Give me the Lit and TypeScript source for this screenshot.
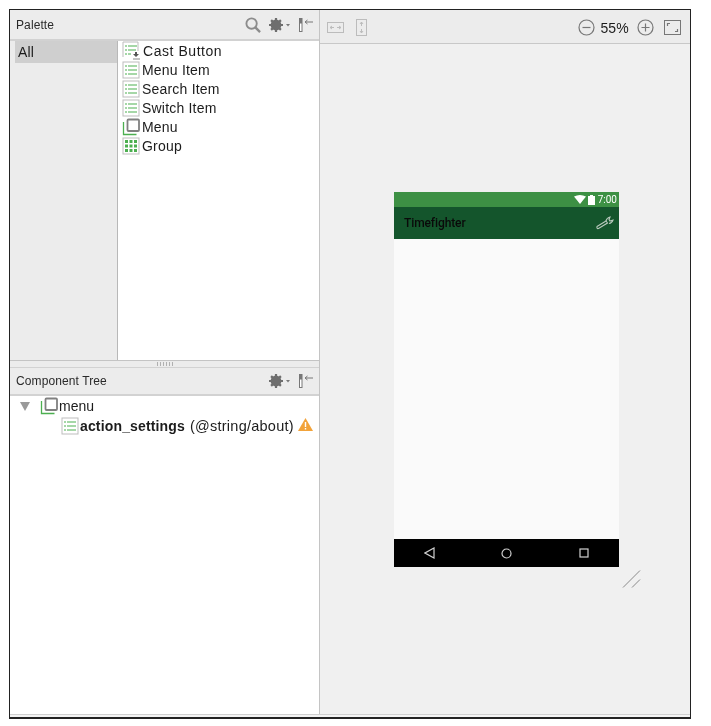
import { LitElement, css, html, svg } from "lit"
import { customElement } from "lit/decorators.js"

const listIcon = svg`<svg class="ico" width="18" height="18" viewBox="0 0 18 18">
  <rect x="1" y="1" width="16" height="16" fill="#fff" stroke="#bdbdbd"/>
  <g stroke="#4caf50" stroke-width="1.2">
    <path d="M3 5h2M6 5h9M3 9h2M6 9h9M3 13h2M6 13h9"/>
  </g>
</svg>`

const castIcon = svg`<svg class="ico" width="18" height="19" viewBox="0 0 18 19">
  <path d="M1 16V1h15v9" fill="#fff" stroke="#bdbdbd"/>
  <g stroke="#4caf50" stroke-width="1.2">
    <path d="M3 5h2M6 5h9M3 9h2M6 9h8M3 13h2M6 13h3"/>
  </g>
  <path d="M13 11h2v2h2l-3 3-3-3h2z" fill="#555"/>
  <path d="M11 18h7" stroke="#888"/>
</svg>`

const menuIcon = svg`<svg class="ico" width="18" height="18" viewBox="0 0 18 18">
  <path d="M1.500 4v12.500h13" fill="none" stroke="#4caf50" stroke-width="1.300"/>
  <rect x="5.500" y="1.500" width="11.500" height="11.500" rx="1" fill="#fff" stroke="#808080" stroke-width="1.800"/>
</svg>`

const groupIcon = svg`<svg class="ico" width="18" height="18" viewBox="0 0 18 18">
  <rect x="1" y="1" width="16" height="16" fill="#fff" stroke="#bdbdbd"/>
  <g fill="#4caf50">
    <rect x="3" y="3" width="3" height="3"/><rect x="7.500" y="3" width="3" height="3"/><rect x="12" y="3" width="3" height="3"/>
    <rect x="3" y="7.500" width="3" height="3"/><rect x="7.500" y="7.500" width="3" height="3"/><rect x="12" y="7.500" width="3" height="3"/>
    <rect x="3" y="12" width="3" height="3"/><rect x="7.500" y="12" width="3" height="3"/><rect x="12" y="12" width="3" height="3"/>
  </g>
</svg>`

const searchIcon = svg`<svg width="16" height="16" viewBox="0 0 17 17" fill="none" stroke="#8c8c8c" stroke-width="2">
  <circle cx="7" cy="7" r="5.500"/><path d="M11 11l5 5" stroke-width="2.500"/>
</svg>`

const gearIcon = svg`<svg width="22" height="14" viewBox="0 0 22 14">
  <circle cx="7" cy="7" r="4" fill="none" stroke="#6e6e6e" stroke-width="2.800"/>
  <path d="M7 0v14M0 7h14M2.100 2.100l9.800 9.800M11.900 2.100l-9.800 9.800" stroke="#6e6e6e" stroke-width="2.200"/>
  <path d="M17 6h4l-2 2.500z" fill="#777"/>
</svg>`

const pinIcon = svg`<svg width="14" height="14" viewBox="0 0 14 14" fill="none">
  <rect x="0.500" y="0.500" width="2.500" height="13" fill="#fff" stroke="#777"/>
  <path d="M0.500 0.500h2.500v5h-2.500z" fill="#777"/>
  <path d="M6 4h8M6 4l2.500-2M6 4l2.500 2" stroke="#777"/>
</svg>`

const warnIcon = svg`<svg width="15" height="13" viewBox="0 0 15 13">
  <path d="M7.500 0L15 13H0z" fill="#f2a33a"/>
  <path d="M6.800 4h1.400v5H6.800zM6.800 10h1.400v1.500H6.800z" fill="#fff"/>
</svg>`

const palette = [
  { name: "Cast Button", icon: castIcon },
  { name: "Menu Item", icon: listIcon },
  { name: "Search Item", icon: listIcon },
  { name: "Switch Item", icon: listIcon },
  { name: "Menu", icon: menuIcon },
  { name: "Group", icon: groupIcon },
]

@customElement("app-root")
export class AppRoot extends LitElement {
  static styles = css`
    :host {
      display: block;
      width: 711px;
      height: 726px;
      background: #fff;
      padding: 9px 0 0 9px;
      box-sizing: border-box;
      font-family: "Liberation Sans", Arial, sans-serif;
      color: #1c1c1c;
    }
    .frame {
      width: 682px;
      height: 710px;
      box-sizing: border-box;
      border: 1.500px solid #222;
      border-bottom-width: 2px;
      display: flex;
      background: #f0f0f0;
      padding-bottom: 3px;
      position: relative;
      filter: blur(0.3px);
    }
    .frame::after {
      content: "";
      position: absolute;
      left: 0;
      right: 0;
      bottom: 0;
      height: 3px;
      background: #f3f3f3;
      border-top: 1px solid #d0d0d0;
      box-sizing: border-box;
    }
    .left {
      width: 309px;
      flex: none;
      display: flex;
      flex-direction: column;
      border-right: 1px solid #c4c4c4;
    }
    .head {
      height: 31px;
      flex: none;
      box-sizing: border-box;
      background: #ececec;
      border-bottom: 2px solid #d2d2d2;
      display: flex;
      align-items: center;
      padding: 0 6px;
      font-size: 12px;
      letter-spacing: 0.1px;
      color: #2a2a2a;
    }
    .head.sub {
      height: 28px;
    }
    .head .title {
      flex: 1;
    }
    .head svg {
      margin-left: 8px;
      display: block;
    }
    .palette {
      height: 319px;
      flex: none;
      display: flex;
      background: #fff;
    }
    .cats {
      width: 108px;
      flex: none;
      background: #ececec;
      border-right: 1px solid #b8b8b8;
      padding-left: 5px;
      box-sizing: border-box;
    }
    .cat {
      height: 22px;
      line-height: 22px;
      background: #cfcfcf;
      font-size: 14px;
      letter-spacing: 0.2px;
      padding-left: 3px;
    }
    .items {
      padding: 0 0 0 4px;
    }
    .item {
      height: 19px;
      display: flex;
      align-items: center;
      gap: 2px;
      font-size: 14px;
      letter-spacing: 0.2px;
    }
    .item:first-child span {
      margin-left: 1px;
      letter-spacing: 0.55px;
    }
    .ico {
      display: block;
      flex: none;
    }
    .split {
      height: 8px;
      flex: none;
      box-sizing: border-box;
      background: #ececec;
      border-top: 1px solid #c4c4c4;
      border-bottom: 1px solid #d2d2d2;
      display: flex;
      justify-content: center;
      align-items: center;
    }
    .grip {
      width: 16px;
      height: 4px;
      background: repeating-linear-gradient(90deg, #b0b0b0 0 1px, transparent 1px 3px);
    }
    .tree {
      flex: 1;
      background: #fff;
      font-size: 14px;
    }
    .row {
      height: 20px;
      display: flex;
      align-items: center;
    }
    .row.root {
      padding-left: 10px;
    }
    .row.root span:last-child {
      margin-left: 1px;
    }
    .row.child {
      padding-left: 51px;
      letter-spacing: 0.15px;
    }
    .row.child .path {
      font-size: 14.5px;
      letter-spacing: 0.25px;
    }
    .arrow {
      width: 0;
      height: 0;
      border-left: 5px solid transparent;
      border-right: 5px solid transparent;
      border-top: 9px solid #9a9a9a;
      margin-right: 10px;
    }
    .row b {
      margin: 0 5px 0 1px;
    }
    .row .warn {
      margin-left: 4px;
      display: block;
    }
    .right {
      flex: 1;
      min-width: 0;
      display: flex;
      flex-direction: column;
      position: relative;
    }
    .bar {
      height: 34px;
      flex: none;
      box-sizing: border-box;
      background: #ececec;
      border-bottom: 1px solid #c8c8c8;
      display: flex;
      align-items: center;
      padding: 2px 9px 0 7px;
    }
    .bar svg {
      display: block;
    }
    .spacer {
      flex: 1;
    }
    .zoom {
      font-size: 14px;
      margin: 0 8px 0 5px;
      letter-spacing: 0.2px;
    }
    .canvas {
      flex: 1;
      padding: 148px 0 0 74px;
      position: relative;
    }
    .phone {
      width: 225px;
      height: 375px;
      display: flex;
      flex-direction: column;
    }
    .status {
      height: 15px;
      flex: none;
      background: #3d9044;
      display: flex;
      align-items: center;
      justify-content: flex-end;
      gap: 2px;
      padding-right: 2px;
      color: #fff;
      font-size: 10px;
      font-family: Roboto, sans-serif;
    }
    .status span {
      margin-left: 1px;
    }
    .appbar {
      height: 32px;
      flex: none;
      background: #14552c;
      display: flex;
      align-items: center;
      justify-content: space-between;
      padding: 0 5px 0 10px;
      font-family: Roboto, sans-serif;
      font-size: 12px;
      font-weight: 500;
      letter-spacing: -0.1px;
      color: #0a0a0a;
    }
    .content {
      flex: 1;
      background: #fafafa;
    }
    .nav {
      height: 28px;
      flex: none;
      background: #000;
      display: flex;
      align-items: center;
      justify-content: space-between;
      padding: 0 30px;
    }
    .nav svg {
      display: block;
    }
    .nav svg:nth-child(2) {
      margin-right: 2px;
    }
    .resize {
      position: absolute;
      left: 302px;
      top: 525px;
      display: block;
    }
  `

  render() {
    return html`
      <div class="frame">
        <div class="left">
          <div class="head">
            <span class="title">Palette</span>
            ${searchIcon}${gearIcon}${pinIcon}
          </div>
          <div class="palette">
            <div class="cats"><div class="cat">All</div></div>
            <div class="items">
              ${palette.map((p) => html`<div class="item">${p.icon}<span>${p.name}</span></div>`)}
            </div>
          </div>
          <div class="split"><div class="grip"></div></div>
          <div class="head sub">
            <span class="title">Component Tree</span>
            ${gearIcon}${pinIcon}
          </div>
          <div class="tree">
            <div class="row root"><span class="arrow"></span>${menuIcon}<span>menu</span></div>
            <div class="row child">
              ${listIcon}<b>action_settings</b><span class="path">(@string/about)</span>
              <span class="warn">${warnIcon}</span>
            </div>
          </div>
        </div>
        <div class="right">
          <div class="bar">
            <svg width="17" height="11" viewBox="0 0 17 11" fill="none" stroke="#bcbcbc">
              <rect x="0.500" y="0.500" width="16" height="10"/>
              <path d="M3 5.500h4M3 5.500l2-1.500M3 5.500l2 1.500M10 5.500h4M14 5.500l-2-1.500M14 5.500l-2 1.500"/>
            </svg>
            <svg style="margin-left:12px" width="11" height="17" viewBox="0 0 11 17" fill="none" stroke="#bcbcbc">
              <rect x="0.500" y="0.500" width="10" height="16"/>
              <path d="M5.500 3v4M5.500 3l-1.500 2M5.500 3l1.500 2M5.500 10v4M5.500 14l-1.500-2M5.500 14l1.500-2"/>
            </svg>
            <span class="spacer"></span>
            <svg width="17" height="17" viewBox="0 0 17 17" fill="none" stroke="#777" stroke-width="1.200">
              <circle cx="8.500" cy="8.500" r="7.500"/><path d="M4.500 8.500h8"/>
            </svg>
            <span class="zoom">55%</span>
            <svg width="17" height="17" viewBox="0 0 17 17" fill="none" stroke="#777" stroke-width="1.200">
              <circle cx="8.500" cy="8.500" r="7.500"/><path d="M4.500 8.500h8M8.500 4.500v8"/>
            </svg>
            <svg style="margin-left:10px" width="17" height="15" viewBox="0 0 17 15" fill="none" stroke="#777">
              <rect x="0.500" y="0.500" width="16" height="14"/>
              <path d="M3.500 6V3.500H6M13.500 9v2.500H11" stroke-width="1.200"/>
            </svg>
          </div>
          <div class="canvas">
            <div class="phone">
              <div class="status">
                <svg width="12" height="9" viewBox="0 0 12 9"><path d="M0 1.500Q6-1.500 12 1.500L6 9z" fill="#fff"/></svg>
                <svg width="7" height="10" viewBox="0 0 7 10"><path d="M2 0h3v1h2v9H0V1h2z" fill="#fff"/></svg>
                <span>7:00</span>
              </div>
              <div class="appbar">
                <span>Timefighter</span>
                <svg width="18" height="14" viewBox="0 0 18 14" fill="none" stroke="#b9c9bd" stroke-width="1.100">
                  <path d="M1 10.500l9-5.500 1.500 2-9 5.500q-2 .5-1.500-2z"/>
                  <path d="M10 5q.5-3 4-4l-1 2.500 1 1.500 3-1q-1 3-4 3.500"/>
                </svg>
              </div>
              <div class="content"></div>
              <div class="nav">
                <svg width="11" height="12" viewBox="0 0 11 12" fill="none" stroke="#d0d0d0" stroke-width="1.200"><path d="M10 1v10L1 6z"/></svg>
                <svg width="11" height="11" viewBox="0 0 11 11" fill="none" stroke="#d0d0d0" stroke-width="1.200"><circle cx="5.500" cy="5.500" r="4.500"/></svg>
                <svg width="10" height="10" viewBox="0 0 10 10" fill="none" stroke="#d0d0d0" stroke-width="1.200"><rect x="1" y="1" width="8" height="8"/></svg>
              </div>
            </div>
            <svg class="resize" width="20" height="20" viewBox="0 0 20 20" fill="none" stroke="#8a8a8a">
              <path d="M1 18.500L18 1.500M10 18.500l8-8"/>
            </svg>
          </div>
        </div>
      </div>
    `
  }
}
